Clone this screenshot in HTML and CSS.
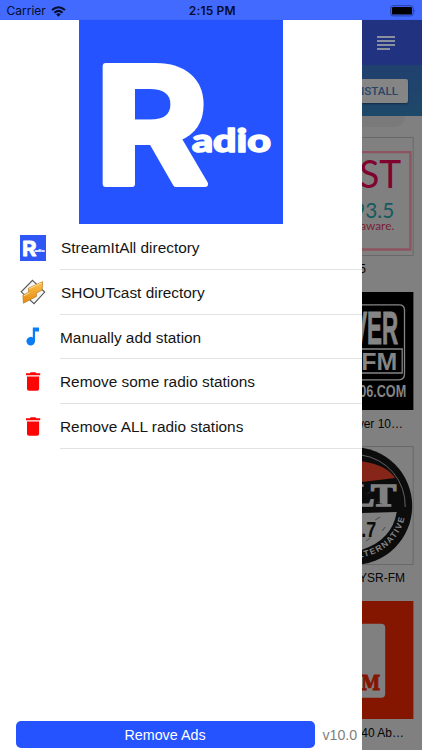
FILE: index.html
```
<!DOCTYPE html>
<html lang="en">
<head>
<meta charset="utf-8">
<title>Radio</title>
<link rel="stylesheet" href="styles.css">
</head>
<body>
<div class="phone">
  <header class="status">
    <div class="carrier"><span>Carrier</span>
      <svg width="15" height="11" viewBox="0 0 15 11"><g fill="none" stroke="#050d2c" stroke-width="2"><path d="M1 4.1Q7.5-1.6 14 4.1"/><path d="M3.4 6.7Q7.5 3.1 11.6 6.7"/></g><path fill="#050d2c" d="M5.1 8.2Q7.5 6.3 9.9 8.2L7.5 10.7z"/></svg>
    </div>
    <div class="clock">2:15 PM</div>
    <div class="battery"><svg width="27" height="12" viewBox="0 0 27 12"><rect x=".7" y=".7" width="22.6" height="10.2" rx="2.5" fill="none" stroke="#25409f"/><rect x="2" y="2" width="20" height="7.6" rx="1.2" fill="#000"/><path d="M24.6 4.2q1.6 1.6 0 3.2z" fill="#25409f"/></svg></div>
  </header>
  <div class="body">
    <aside class="drawer">
      <svg class="logo" viewBox="0 0 204 204">
        <rect width="204" height="204" fill="#2453ff"/>
        <text class="big" x="15.5" y="164" textLength="114" lengthAdjust="spacingAndGlyphs">R</text>
        <text class="small" x="113" y="132" textLength="79" lengthAdjust="spacingAndGlyphs">adio</text>
      </svg>
      <ul class="menu">
        <li><span class="icon"><svg width="26" height="26" viewBox="0 0 204 204"><rect width="204" height="204" fill="#2f57f5"/><text class="big" x="15.5" y="164" textLength="114" lengthAdjust="spacingAndGlyphs">R</text><text class="small" x="113" y="132" textLength="79" lengthAdjust="spacingAndGlyphs">adio</text></svg></span><span class="name in">StreamItAll directory</span></li>
        <li><span class="icon"><svg width="26" height="26" viewBox="0 0 26 26"><defs><linearGradient id="bolt" x2="0" y2="1"><stop offset="0" stop-color="#ffc34d"/><stop offset="1" stop-color="#e38a0e"/></linearGradient></defs><path d="M12.5 1.3 24.7 13 14 24.6 1.2 12.8z" fill="#f5f5f5" stroke="#555" stroke-width="1.1"/><path d="M22.6 2.6 22.2 11 16.4 14.1 16.4 17.5 3.4 24.2 2.9 16.3 8.7 13.2 8.5 9.2z" fill="url(#bolt)" stroke="#b9791c" stroke-width=".7"/><path d="M9.3 9.7 21.7 3.8M3.8 16.8 9.6 13.7" stroke="#ffe0a0" fill="none"/></svg></span><span class="name in">SHOUTcast directory</span></li>
        <li><span class="icon"><svg width="26" height="26" viewBox="0 0 26 26"><path fill="#0a7cf5" d="M12.8 3.4H19v4h-4v9.8a4.3 4.3 0 1 1-2.2-3.8z"/></svg></span><span class="name">Manually add station</span></li>
        <li><span class="icon"><svg width="26" height="26" viewBox="0 0 26 26"><path fill="#fb0505" d="M6 4.2h3.8l1-1h4.6l1 1h3.8v2H6zM7 7.4h12.1v12.3q0 2-2 2H9q-2 0-2-2z"/></svg></span><span class="name">Remove some radio stations</span></li>
        <li><span class="icon"><svg width="26" height="26" viewBox="0 0 26 26"><path fill="#fb0505" d="M6 4.2h3.8l1-1h4.6l1 1h3.8v2H6zM7 7.4h12.1v12.3q0 2-2 2H9q-2 0-2-2z"/></svg></span><span class="name">Remove ALL radio stations</span></li>
      </ul>
      <footer class="foot"><button class="ads">Remove Ads</button><span class="version">v10.0</span></footer>
    </aside>
    <main class="stations">
      <div class="toolbar"><svg width="18" height="15" viewBox="0 0 18 15"><path d="M0 1h18M0 5h18M0 9h18M0 13h13" stroke="#8b909e" stroke-width="1.8"/></svg></div>
      <div class="banner"><span class="install">INSTALL</span></div>
      <div class="tab"></div>
      <article>
        <svg width="53" height="119" viewBox="0.8 0 53 119"><path d="M0 .5h52v118H0" fill="#808080" stroke="#696969"/><path d="M0 15.2h49.2v97.3H0" fill="none" stroke="#8e5360" stroke-width="2.3"/><text x="-2" y="51" class="cast" textLength="42" lengthAdjust="spacingAndGlyphs">ST</text><text x="-8" y="81" class="freq" textLength="41" lengthAdjust="spacingAndGlyphs">93.5</text><text x="-1" y="93" class="aware" textLength="34" lengthAdjust="spacingAndGlyphs">aware.</text></svg>
        <p class="p1">93.5</p>
      </article>
      <article>
        <svg width="53" height="119" viewBox="0.8 0 53 119"><path d="M0 0h52.2v118H0z" fill="#000"/><path d="M0 12.8h38q5.3 0 5.3 5.3v64q0 5.7-5.7 5.7H0M0 57h41v24H0" fill="none" stroke="#858585" stroke-width="1.3"/><text x="-9" y="52" class="power" textLength="46" lengthAdjust="spacingAndGlyphs">VER</text><text x="0" y="78" class="fm" textLength="36" lengthAdjust="spacingAndGlyphs">FM</text><text x="-9" y="105" class="site" textLength="54" lengthAdjust="spacingAndGlyphs">106.COM</text></svg>
        <p class="p2">Power 10…</p>
      </article>
      <article>
        <svg width="53" height="119" viewBox="0.8 0 53 119"><path d="M0 .5h52v118H0" fill="#808080" stroke="#696969"/><circle cx="-8" cy="60" r="59" fill="#0c0c0c"/><path d="M0 9a51 51 0 0 1 44 52" fill="none" stroke="#777" stroke-width=".8"/><path d="M0 15Q26 19 34 32L0 36z" fill="#862619"/><path d="M0 67 35.5 66Q31 94 0 104z" fill="#808080"/><text x="-12" y="60" class="alt" textLength="47" lengthAdjust="spacingAndGlyphs">LT</text><text x="-10" y="91" class="seven" textLength="25" lengthAdjust="spacingAndGlyphs">3.7</text><path id="ring" d="M-10 111.5A51 51 0 0 0 44.5 60" fill="none"/><text class="ringtext"><textPath href="#ring" textLength="72">ALTERNATIVE</textPath></text><path d="m6 48 3-2m7 10 5 2m-7 16 5-3m-14 24 4-3m12-7 3-4" stroke="#333" stroke-width=".7"/></svg>
        <p class="p3">WYSR-FM</p>
      </article>
      <article>
        <svg width="53" height="119" viewBox="0.8 0 53 119"><path d="M0 0h52.2v118H0z" fill="#841600"/><path d="M0 22.8h20q4 0 4 4v66q0 4-4 4H0z" fill="#808080"/><text x="0" y="89" class="slab" textLength="19" lengthAdjust="spacingAndGlyphs">M</text></svg>
        <p class="p4">40 Ab…</p>
      </article>
    </main>
  </div>
</div>
</body>
</html>
```
FILE: styles.css
```
* { box-sizing: border-box; }
body { margin: 0; font-family: "Liberation Sans", Arial, sans-serif; color: #151515; }
.phone { width: 422px; height: 750px; overflow: hidden; display: flex; flex-direction: column; }
.status { height: 20px; flex: none; background: linear-gradient(#426aff 19px, #3e63ee 20px); color: #050d2c; display: grid; grid-template-columns: 1fr auto 1fr; align-items: center; font: 12px/20px Inter, sans-serif; padding: 1px 5px 0 6.5px; }
.carrier { display: flex; align-items: center; gap: 5px; }
.clock { font-weight: 600; letter-spacing: .15px; padding-left: 1px; }
.battery { display: flex; justify-content: flex-end; }
.body { flex: 1; display: flex; min-height: 0; }
.drawer { width: 362px; flex: none; background: #fff; display: flex; flex-direction: column; }
.logo { width: 204px; height: 204px; margin-left: 79px; flex: none; }
text { font-family: Lato, sans-serif; }
.big, .small { font-weight: 900; fill: #fff; stroke: #fff; stroke-linejoin: round; }
.big { font-family: Inter, sans-serif; font-weight: 700; font-size: 162px; stroke-width: 6px; }
.small { font-size: 33px; stroke-width: 1.5px; }
.menu { list-style: none; margin: 1px 0 0; padding: 0; }
.menu li { height: 44.8px; display: flex; padding-left: 20px; }
.icon { width: 40px; display: flex; padding-top: 9.5px; }
.name { flex: 1; border-bottom: 1px solid #e2e2e2; font-size: 15.4px; line-height: 46px; white-space: nowrap; }
.in { padding-left: 1px; }
.foot { margin-top: auto; height: 29px; display: flex; padding-left: 15.5px; }
.ads { width: 299px; height: 26.5px; border: 0; border-radius: 5px; padding: 1px 0 0; background: #2453ff; color: #fff; font: 14.3px "Liberation Sans", Arial, sans-serif; }
.version { color: #808080; font-size: 14.2px; line-height: 28px; margin-left: 8px; }
.stations { flex: 1; min-width: 0; overflow: hidden; background: #808080; }
.toolbar { height: 45px; background: #213280; display: flex; justify-content: center; padding: 16px 12px 0 0; }
.toolbar svg { flex: none; }
.banner { height: 51px; background: linear-gradient(#20406f, #1e4969); display: flex; justify-content: flex-end; padding: 14px 14px 0 0; }
.install { flex: none; width: 70px; height: 24px; border-radius: 2px; background: #858585; box-shadow: 0 1px 2px #142d44; color: #294667; font: 500 11.6px/25px Roboto, sans-serif; text-align: right; padding-right: 10px; }
.tab { width: 43px; height: 11px; margin-bottom: 10px; background: #7a7a7a; border-bottom-right-radius: 10px; }
article { height: 154.5px; }
article svg { display: block; }
article p { margin: 0; height: 26px; display: flex; justify-content: flex-end; font-size: 12px; line-height: 27px; color: #050505; white-space: nowrap; }
.p1 { padding-right: 56px; }
.p2 { padding-right: 19px; }
.p3 { padding-right: 17px; }
.p4 { padding-right: 18px; }
.cast { font-size: 38px; fill: #80032f; }
.freq { font-size: 21px; fill: #16595d; }
.aware { font-size: 11px; fill: #7b2034; }
.power { font: bold 46px "Liberation Sans", sans-serif; fill: #858585; stroke: #858585; }
.fm { font: bold 24px "Liberation Sans", sans-serif; fill: #858585; }
.site { font: bold 16px "Liberation Sans", sans-serif; fill: #858585; }
.alt { font: bold 32px "Liberation Serif", serif; fill: #808080; stroke: #808080; stroke-width: 1.5px; }
.seven { font: bold 22px "Liberation Sans", sans-serif; fill: #0c0c0c; }
.ringtext { font: bold 8.5px "Liberation Sans", sans-serif; fill: #858585; }
.slab { font: bold 20px "DejaVu Serif", serif; fill: #841600; stroke: #841600; }
```
